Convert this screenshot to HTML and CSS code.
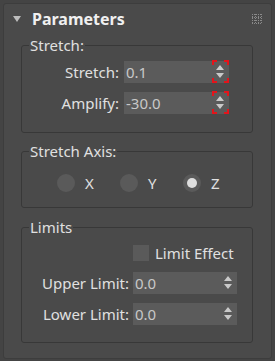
FILE: index.html
```html
<!DOCTYPE html>
<html lang="en">
<head>
    <meta charset="UTF-8">
    <title>Parameters</title>
    <link rel="stylesheet" href="styles.css">
</head>
<body>
<div class="panel">
    <div class="head">
        <span class="arrow"></span>
        <span class="title">Parameters</span>
        <svg class="grip" width="10" height="10" viewBox="0 0 10 10">
            <g stroke="#8a8a8a" stroke-width="1" stroke-dasharray="1 1">
                <path d="M0.5 0 V10 M3.5 0 V10 M6.5 0 V10 M9.5 0 V10"/>
                <path d="M0 0.5 H10 M0 3.5 H10 M0 6.5 H10 M0 9.5 H10"/>
            </g>
        </svg>
    </div>

    <fieldset class="group stretch">
        <legend>Stretch:</legend>
        <div class="grid">
            <span class="lbl">Stretch:</span>
            <div class="spin"><span class="val">0.1</span>
                <svg class="arrows" width="17" height="22" viewBox="0 0 17 22">
                    <path d="M4 9 L12 9 L8 4 Z M4 12 L12 12 L8 17 Z" fill="#c9c9c9"/>
                    <g class="mark" fill="none" stroke="#e3141b" stroke-width="2">
                        <path d="M1 4 V0 H5 M12 0 H16 V4 M1 17 V21 H5 M12 21 H16 V17"/>
                    </g>
                </svg>
            </div>
            <span class="lbl">Amplify:</span>
            <div class="spin"><span class="val">-30.0</span>
                <svg class="arrows" width="17" height="22" viewBox="0 0 17 22">
                    <path d="M4 9 L12 9 L8 4 Z M4 12 L12 12 L8 17 Z" fill="#c9c9c9"/>
                    <g class="mark" fill="none" stroke="#e3141b" stroke-width="2">
                        <path d="M1 4 V0 H5 M12 0 H16 V4 M1 17 V21 H5 M12 21 H16 V17"/>
                    </g>
                </svg>
            </div>
        </div>
    </fieldset>

    <fieldset class="group axis">
        <legend>Stretch Axis:</legend>
        <div class="radios">
            <label class="radio"><span class="dot"></span>X</label>
            <label class="radio"><span class="dot"></span>Y</label>
            <label class="radio"><span class="dot on"></span>Z</label>
        </div>
    </fieldset>

    <fieldset class="group limits">
        <legend>Limits</legend>
        <div class="grid">
            <label class="check"><span class="box"></span>Limit Effect</label>
            <span class="lbl">Upper Limit:</span>
            <div class="spin"><span class="val">0.0</span>
                <svg class="arrows" width="17" height="22" viewBox="0 0 17 22">
                    <path d="M4 9 L12 9 L8 4 Z M4 12 L12 12 L8 17 Z" fill="#c9c9c9"/>
                </svg>
            </div>
            <span class="lbl">Lower Limit:</span>
            <div class="spin"><span class="val">0.0</span>
                <svg class="arrows" width="17" height="22" viewBox="0 0 17 22">
                    <path d="M4 9 L12 9 L8 4 Z M4 12 L12 12 L8 17 Z" fill="#c9c9c9"/>
                </svg>
            </div>
        </div>
    </fieldset>
</div>
</body>
</html>
```

FILE: styles.css
```css
* {
    margin: 0;
    padding: 0;
    box-sizing: border-box;
}

body {
    background-color: #444;
    padding: 3px;
    font-family: "Noto Sans", "Open Sans", sans-serif;
    font-size: 15px;
    color: #e0e0e0;
}

.panel {
    width: 269px;
    height: 356px;
    background-color: #4a4a4a;
    border: 1px solid #3d3d3d;
    border-radius: 3px;
}

/* rollout title */
.head {
    height: 30px;
    display: flex;
    align-items: center;
    padding-left: 9px;
    padding-right: 9px;
}

.arrow {
    width: 0;
    height: 0;
    border-left: 4px solid transparent;
    border-right: 4px solid transparent;
    border-top: 6px solid #bdbdbd;
    margin-right: 11px;
}

.title {
    flex: 1;
    font-weight: bold;
    font-size: 16px;
    color: #f0f0f0;
}

.grip {
    display: block;
}

/* groups */
.group {
    margin: 1px 0 0 17px;
    width: 232px;
    border: 1px solid #383838;
    border-radius: 3px;
}

.group legend {
    margin-left: 7px;
    padding: 0 1px;
    line-height: 20px;
}

.stretch {
    padding: 6px 23px 18px 0;
}

.axis {
    margin-top: 8px;
    padding: 11px 0 13px 0;
}

.limits {
    margin-top: 9px;
    padding: 8px 15px 17px 0;
}

.grid {
    display: grid;
    grid-template-columns: 1fr 105px;
    column-gap: 5px;
    row-gap: 9px;
    align-items: center;
}

.limits .grid {
    grid-template-columns: 1fr 104px;
    column-gap: 4px;
}

.lbl {
    text-align: right;
}

.spin {
    height: 22px;
    display: flex;
    align-items: center;
    background-color: #5b5b5b;
    color: #c8c8c8;
    padding-left: 2px;
}

.val {
    flex: 1;
}

.arrows {
    display: block;
    overflow: visible;
}

/* radio buttons */
.radios {
    display: flex;
    height: 22px;
    align-items: center;
    padding-left: 35px;
}

.radio {
    width: 63px;
    display: flex;
    align-items: center;
    gap: 10px;
}

.dot {
    width: 18px;
    height: 18px;
    border-radius: 50%;
    background-color: #5a5a5a;
    display: flex;
    align-items: center;
    justify-content: center;
}

.dot.on::after {
    content: "";
    width: 10px;
    height: 10px;
    border-radius: 50%;
    background-color: #dedede;
}

/* checkbox */
.check {
    grid-column: 2;
    display: flex;
    align-items: center;
    gap: 6px;
    height: 16px;
    margin-bottom: 2px;
}

.box {
    width: 16px;
    height: 16px;
    background-color: #5a5a5a;
}
```
